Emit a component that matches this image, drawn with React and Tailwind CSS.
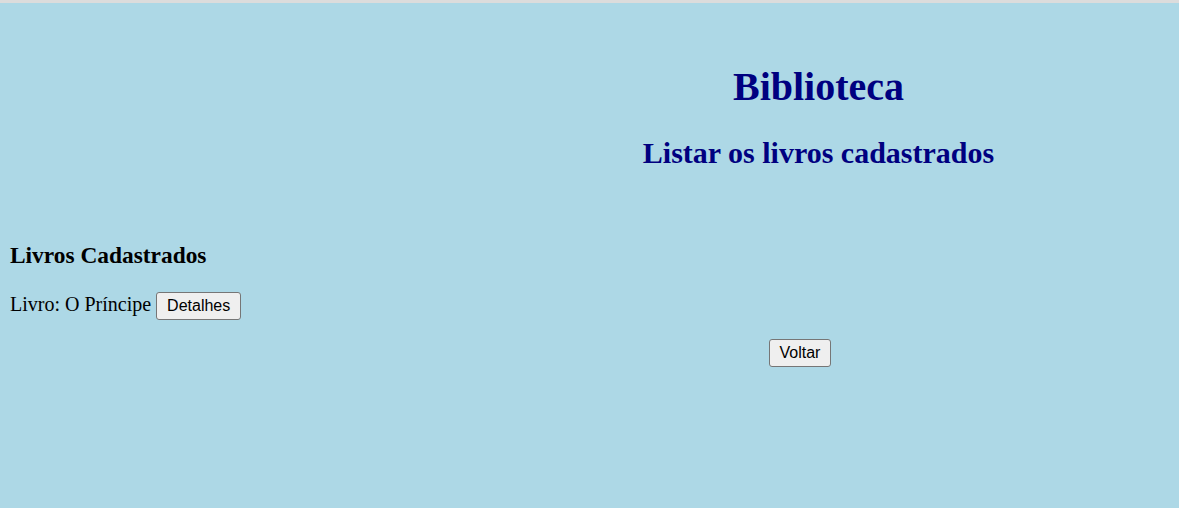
import React from 'react';

// Botão no estilo padrão do navegador
const Botao = ({ children }) => (
  <button className="inline-block border border-[#767676] rounded-[3px] bg-[#efefef] px-[10px] py-[4px] text-[16px] leading-[18px] text-black font-['Liberation_Sans',Arial,sans-serif] align-baseline">
    {children}
  </button>
);

const App = () => {
  return (
    <div className="min-h-[508px] bg-[#add8e6] border-t-[3px] border-[#dcdcdc] font-['Liberation_Serif','Times_New_Roman',serif] text-black">
      <header className="ml-[458px] pt-[61px] text-center text-[#000080]">
        <h1 className="text-[40px] leading-[46px] font-bold">Biblioteca</h1>
        <h2 className="mt-[26px] text-[30px] leading-[34px] font-bold">Listar os livros cadastrados</h2>
      </header>

      <section className="pl-[10px] mt-[72px]">
        <h3 className="text-[23.4px] leading-[27px] font-bold">Livros Cadastrados</h3>
        <div className="mt-[23px] text-[20px] leading-[23px]">
          Livro: O Príncipe <Botao>Detalhes</Botao>
        </div>
      </section>

      <div className="mt-[19px] pl-[421px] flex justify-center">
        <Botao>Voltar</Botao>
      </div>
    </div>
  );
};

export default App;
